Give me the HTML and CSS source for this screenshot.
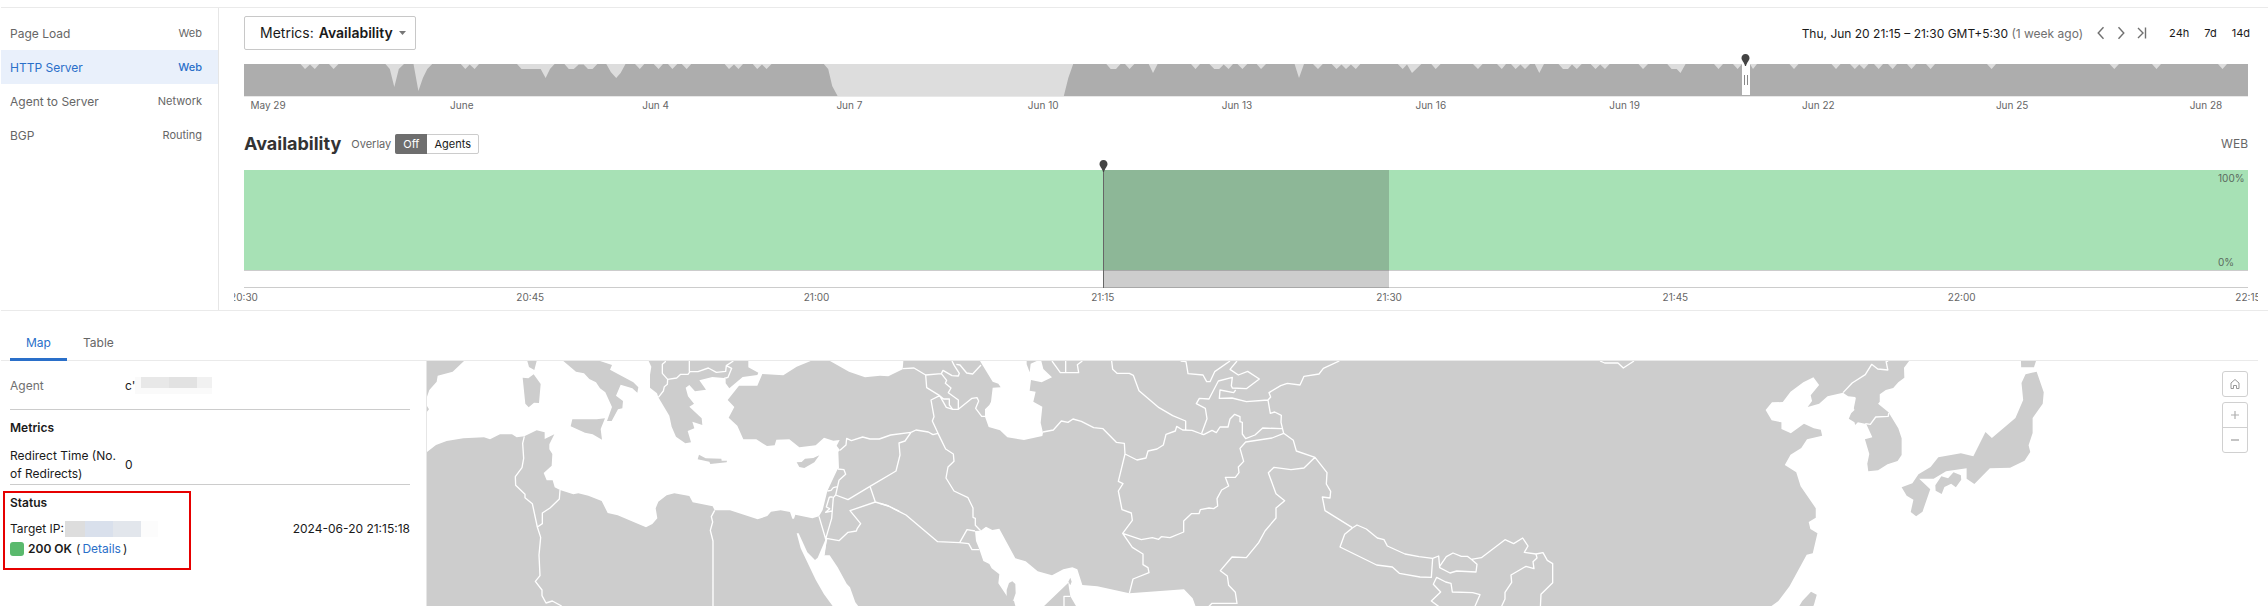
FILE: index.html
```
<!DOCTYPE html>
<html lang="en">
<head>
<meta charset="utf-8">
<title>Test view</title>
<link rel="stylesheet" href="styles.css">
</head>
<body>
<section class="top">
  <nav class="layers">
    <a class="layer" href="#page"><span>Page Load</span><span class="layer-type">Web</span></a>
    <a class="layer active" href="#http"><span>HTTP Server</span><span class="layer-type">Web</span></a>
    <a class="layer" href="#agent"><span>Agent to Server</span><span class="layer-type">Network</span></a>
    <a class="layer" href="#bgp"><span>BGP</span><span class="layer-type">Routing</span></a>
  </nav>
  <main class="timeline">
    <div class="toolbar">
      <button class="metric-button" type="button">Metrics: <b>Availability</b><svg width="7" height="4" viewBox="0 0 7 4"><path d="M0 0H7L3.500 4Z" fill="#777"/></svg></button>
      <div class="range">
        <span class="date">Thu, Jun 20 21:15 – 21:30 GMT+5:30 <span class="muted">(1 week ago)</span></span>
        <span class="steps">
          <button type="button" aria-label="Previous"><svg width="8" height="14" viewBox="0 0 8 14"><path d="M6.500 1.200L1.200 7L6.500 12.800"/></svg></button>
          <button type="button" aria-label="Next"><svg width="8" height="14" viewBox="0 0 8 14"><path d="M1.500 1.200L6.800 7L1.500 12.800"/></svg></button>
          <button type="button" aria-label="Latest"><svg width="10" height="14" viewBox="0 0 10 14"><path d="M1 2L6 7L1 12M8.500 1.500V12.500"/></svg></button>
        </span>
        <span class="spans">
          <button type="button">24h</button><button type="button">7d</button><button type="button">14d</button>
        </span>
      </div>
    </div>
    <div class="overview">
      <svg class="overview-plot" viewBox="0 0 2004 32" preserveAspectRatio="none">
        <rect width="2004" height="32" fill="#adadad"/>
        <path fill="#ddd" d="M56.500 0L61 5L66 .5L70.800 5L75.300 0ZM85 0L89.600 5L94.500 0ZM141.400 0L145.800 5L150.300 23L154.800 5L160 0ZM169.500 0L174.400 27L178.900 14L183.300 5L188.200 0ZM216.800 0L221.300 5L225.700 .5L230.600 5L235 0ZM273 0L277.500 5H296.700L301.600 14L306 5L310.600 0ZM320.400 0L324.800 5H329.800L334.700 .5H339.600L344 5H348.500L353.400 0ZM362.300 0L366.800 8L372.200 14L376.600 9L381.500 0ZM391 0L395.800 5L400.300 0ZM409.700 0L414.600 5L419 0ZM424 0L428.400 5L433.300 0ZM437.800 0L442.700 5L447.200 0ZM480.600 0L485 5L490 .5L494.500 5L499 0ZM508.800 0L513.200 5L518 .5L522.600 5L527.500 0ZM579.800 0L584.200 5L588.200 22L593.600 32H819.800L824.300 14L829.200 0ZM862.300 0L866.700 5H872L876.500 0ZM881 0L885.500 5L890.400 0ZM904.700 0L909 9L913.600 0ZM947 0L951.500 5L956 0ZM965.400 0L970.300 5H975.200L979.700 .5L984.600 5L989 0ZM993.500 0L998.400 5L1003.300 0ZM1012.700 0L1017 5L1022 0ZM1050.600 0L1055 14L1060 0ZM1069 0L1074 5L1078.800 0ZM1087.700 0L1092.600 5L1097.500 .5L1102 5L1106.900 .5L1111.800 5L1116.300 0ZM1153.800 0L1158.700 5L1163 .5L1168 9L1177.400 0ZM1187.300 0L1191.700 5L1196.600 0ZM1229 0L1234 5L1238.600 0ZM1253 0L1257.800 5L1262 0ZM1267 0L1271.600 5L1276.500 .5L1281 5L1286 0ZM1290.800 0L1295.300 9L1300 0ZM1314.500 0L1319 5H1324L1328 .5L1332.800 5L1337.700 0ZM1346.600 0L1351.500 5L1356.200 .5L1361 5L1365.600 0ZM1394.500 0L1399 5L1404 0ZM1423.300 0L1427.600 5H1432.700L1436.500 9L1441.600 0ZM1470 0L1474.500 5L1479 0ZM1489 0L1493.600 5L1498 0ZM1506 0L1509 5L1513 0ZM1545.500 0L1550 5L1554.500 0ZM1587.500 0L1592 5L1596.500 0ZM1606 0L1610.800 5L1615.300 .5L1620 5L1624.500 0ZM1630 0L1634.700 5L1639 0ZM1644 0L1648.700 5L1653 0ZM1663 0L1667.500 5L1672 0ZM1682 0L1686.600 5L1691 0ZM1743 0L1747.600 5L1752 0ZM1865.600 0L1870.300 5L1875 0ZM1908 0L1912.500 5L1917 0ZM1974 0L1978.500 5L1983 0Z"/>
      </svg>
      <div class="handle"><svg class="pin" width="9" height="12" viewBox="0 0 9 12"><path d="M4.500 0C2 0 .5 1.800 .5 4C.5 6.500 3 8 4 12H5C6 8 8.500 6.500 8.500 4C8.500 1.800 7 0 4.500 0Z"/></svg></div>
    </div>
    <div class="day-axis">
      <span>May 29</span><span>June</span><span>Jun 4</span><span>Jun 7</span><span>Jun 10</span><span>Jun 13</span><span>Jun 16</span><span>Jun 19</span><span>Jun 22</span><span>Jun 25</span><span>Jun 28</span>
    </div>
    <div class="chart-head">
      <h2>Availability</h2>
      <span class="overlay-label">Overlay</span>
      <div class="toggle"><button class="on" type="button">Off</button><button type="button">Agents</button></div>
      <span class="web">WEB</span>
    </div>
    <div class="chart">
      <div class="area"><span>100%</span><span>0%</span></div>
      <div class="selection"><svg class="pin" width="9" height="12" viewBox="0 0 9 12"><path d="M4.500 0C2 0 .5 1.800 .5 4C.5 6.500 3 8 4 12H5C6 8 8.500 6.500 8.500 4C8.500 1.800 7 0 4.500 0Z"/></svg></div>
    </div>
    <div class="time-clip"><div class="time-axis">
      <span>20:30</span><span>20:45</span><span>21:00</span><span>21:15</span><span>21:30</span><span>21:45</span><span>22:00</span><span>22:15</span>
    </div></div>
  </main>
</section>
<section class="bottom">
  <nav class="tabs"><a class="tab current" href="#map">Map</a><a class="tab" href="#table">Table</a></nav>
  <div class="views">
    <aside class="details">
      <div class="row agent"><span class="key muted">Agent</span><span>c'</span><span class="mask"><i class="m1"></i><i class="m2"></i><i class="m3"></i></span></div>
      <div class="group">
        <h3>Metrics</h3>
        <div class="row"><span class="key">Redirect Time (No. of Redirects)</span><span>0</span></div>
      </div>
      <div class="group status">
        <h3>Status</h3>
        <div class="row target"><span>Target IP:</span><span class="mask ip"><i class="p1"></i><i class="p2"></i><i class="p3"></i><i class="p4"></i></span><time>2024-06-20 21:15:18</time></div>
        <div class="row code"><i class="square"></i><b>200 OK</b><span class="more">(<a href="#details">Details</a>)</span></div>
      </div>
      <div class="highlight"></div>
    </aside>
    <div class="map">
      <svg class="world" viewBox="1281 18 5493 735" preserveAspectRatio="xMinYMin slice">
        <rect x="1260" y="0" width="4600" height="760" fill="#cdcdcd"/>
        <g transform="translate(1260 0)">
          <path class="sea" d="M132 10V18L98 50L53 62L50 80L28 105L20 128V292L48 270L80 258L130 250L192 247L210 253L240 238H276L290 247L313 244L350 226L374 232V252L403 238L388 268V283L397 297L395 332L371 354L380 376H398L404 397L420 405L460 418L475 415L505 422L545 438L563 474L593 481L678 517L697 507L712 490L707 460L715 440L740 421L763 415L808 423L818 442L878 454L884 466H930L1013 493L1042 483L1053 470L1082 466L1110 471L1117 491H1122L1126 479L1177 490L1197 484L1208 465L1222 408L1253 342L1257 340L1255 290L1260 286L1250 272L1259 255L1240 257L1212 248L1187 271L1138 277L1108 253L1069 254L1064 271L1041 273L1009 253H970L952 212L926 188L943 156L923 135L957 92H1012L1027 57L1090 61L1130 35L1172 18V10H985V37L1015 53L1012 60L968 66L928 100L917 85V66L911 69L877 66L838 76L858 104L825 109L808 90L797 98L804 124L822 146L808 155L845 190L847 210L817 200L823 220L803 228L813 262L796 265L768 245L755 215L748 182L715 127L711 115L690 98V60L694 35L686 18V10H540V18L576 30L570 44L640 82L655 97L652 113L637 100L602 89L588 122L609 138L607 160L594 163L575 198H561L576 156L556 112L540 100L528 82L508 72L492 55L468 50L430 18V10Z"/>
          <path class="sea" d="M1230 10V18L1287 50L1335 67L1380 62L1405 64L1448 43L1450 18V10Z"/>
          <path class="sea" d="M1130 535H1136L1162 592L1185 615L1193 608L1217 552H1222L1212 601H1229L1253 637L1280 686L1290 697L1306 742L1320 760H1243L1212 718L1187 674L1142 580Z"/>
          <path class="land" d="M308 68L325 70L341 58L362 87L357 144L342 143L326 157L316 146ZM322 10H350V18L343 45L327 36L322 18ZM457 193H530L555 190L542 222L546 254L518 238L495 233L452 214ZM837 299L857 310L904 311L905 317H921L920 322L871 327L868 320L833 313ZM1130 322L1145 321L1155 311L1180 309L1198 301L1183 322L1153 339L1138 336ZM18 148L27 163L18 174Z"/>
          <path class="line" d="M313 244L308 265L311 310L306 338L286 365L287 391L315 418V428L337 446L352 516L362 547L357 600L360 662L346 679L366 705V722L378 744L397 738L425 753M420 405L418 432L390 459L367 474V506L352 516M884 466L874 485L878 501L871 526L879 558V760M1197 484L1217 552M736 10V20L727 28V55L743 73L770 69L782 58H804L810 50H834L865 39L889 52L917 49L919 32L940 18M808 10V50M743 73L742 88L733 95L730 108L715 127M919 32L935 40L924 67L917 69M1260 286L1278 270L1280 250L1294 257L1328 246L1350 252H1378L1412 240L1473 232M1253 342L1272 344L1277 358L1257 376L1252 398L1247 420L1240 428L1235 490L1219 545L1212 601M1247 420L1284 434L1350 394L1428 348L1440 300L1437 264L1455 258L1473 232M1350 394L1366 441L1290 467L1322 506L1312 520L1309 528L1284 532L1257 557L1219 550M1366 441L1405 453L1438 469M1252 395L1240 398L1233 406L1222 408M1228 426H1238M1228 426L1219 456L1229 461L1217 472L1236 468"/>
        </g>
        <g transform="translate(2640 0)">
          <path class="sea" d="M296 10L300 18L338 80L355 86L362 97L338 98L333 140L328 150L315 163V185L326 216L360 226L382 247L432 255L487 243L489 233L482 203L487 155L460 140L467 110L449 107L453 75L485 82L516 67L490 42L484 18V10H470V18L452 26L449 52L440 28V10Z"/>
          <path class="sea" d="M285 528L302 527L318 515L337 525L358 521L406 610L437 619L473 649L516 661L550 643L577 637L592 643L607 690L652 694L748 715L912 703L938 730L949 760H592L571 724L567 700L565 683L485 760H408L402 738L382 725L355 685L358 658L335 640L328 627L310 618L298 583L288 558Z"/>
          <path class="land" d="M380 705L387 684L397 679L406 687L407 715L400 735L390 738L380 728ZM565 680L571 668L575 680L571 691Z"/>
          <path class="line" d="M68 41L102 39L137 60L184 56L189 46L216 62L235 63L238 55L223 32L216 18M229 28L240 30L260 54L278 57L303 30M137 60L140 98L179 122L199 157L218 163L208 150V132H191L179 122M184 56L200 76L196 85L213 99L205 113L235 135V163L218 163M235 163L276 130L291 128L296 138L287 160L305 184H315M179 122L153 135L162 185L157 198L174 235L159 239L145 231L108 225L93 232M174 235L197 282L220 297L222 319L204 336L198 369L222 408L264 428L279 459V487L286 490V511L302 527M58 470L78 480L173 560L239 563L266 566L276 584H298M58 470L26 453L0 445M239 563L261 524L285 528M489 231L520 225L544 198L564 202L579 192L604 199L641 218L669 221L709 262L733 265L735 297L715 379L729 386L715 408L726 464L754 474L757 496L728 535L757 577L789 597V629L804 638L807 653L759 672L748 715M735 297L771 315L798 309L804 288L831 282L850 270L858 238L886 228L890 214L908 225L936 226L965 237L971 239L996 226L1009 233L1020 216H1044L1050 192L1064 178L1080 185V200L1087 202V237L1097 251L1125 240L1148 219L1206 221M728 535L784 554L817 548L836 553L844 545L870 548L911 531V498L934 476H957L961 464L987 459L1001 461L1013 453L1011 431L1025 405L1046 393L1036 367H1066L1077 353L1075 336L1091 319L1080 280L1097 261L1176 249L1211 235M516 18L541 53H596L592 29L607 18M557 10V53M694 10L698 43L711 55H748L760 61L777 107L837 158L878 182L917 198V226M902 18L918 20L924 56L969 60L980 80H990L1004 50L1050 18M1071 18L1050 43L1075 60L1103 49L1138 72L1099 101L1057 99L1054 92L1057 67L1015 78L987 132L958 130L949 146L976 160L981 191L965 235M1067 105L1061 113L1020 105L1018 130L1056 129L1099 140L1164 135L1171 175L1184 171L1204 181L1203 202L1211 235L1240 256L1249 288L1305 307L1341 353L1339 387L1352 409L1350 429L1327 426L1335 467L1417 518M1164 135L1172 126L1167 113L1202 92L1222 85L1260 90L1272 64L1317 57L1330 40L1378 18M1305 307L1272 339L1233 344L1182 337L1165 353L1188 416L1214 437L1188 459V489L1155 528L1136 563L1099 608L1056 606L1021 647L1042 663L1046 691L1066 712L1071 745H996L985 756"/>
          <path class="line" d="M552 760V724H571"/>
        </g>
        <g transform="translate(3900 0)">
          <path class="line" d="M157 519L171 510L199 522L232 549L252 554L262 573L315 597L357 605L398 610L394 667L360 666L298 655L277 636L230 630L120 576L134 538L157 519M398 610L416 603L419 638L450 654L470 648L528 651L531 628L514 613L502 604H484L459 594L439 605L419 634M514 613L544 608L615 554L641 566L668 549L684 573L673 592L708 597L729 593L742 616L758 626V683L723 718L721 760M708 597L711 609L699 620L702 641L678 634L633 660L635 682L615 712V732L603 758M417 755L394 738L422 711L400 688L410 667L437 681L453 685L457 711L518 713L540 719L524 756M900 18L914 24H954L970 39L1002 18"/>
        </g>
        <g transform="translate(5220 0) scale(1.0102 1)">
          <path class="sea" d="M1600 10H502V18L487 38L488 68L470 82L455 99L433 105L415 118V140L410 146L441 172L470 220L480 250V300L468 318L438 328L410 346L381 349L378 326L384 297L371 253L393 247L375 207L350 202L342 210L340 202L323 191L330 175L340 165L338 160L344 130L342 126L321 124L306 113L260 124L235 146L201 156L214 138L210 121L235 90L218 67L188 82L150 110L127 141L95 142L76 165L94 196L123 202V222L151 235L190 206L219 220L240 224L244 242L199 253L182 279L150 299L133 330L167 352L180 394L225 460V488L204 501L209 522L230 535L216 595L198 599L147 694L114 738L84 760H1600Z"/>
          <path class="line" d="M306 113L333 84L372 59L391 28L409 42L439 45L434 20L440 18M372 206L387 208L403 186L440 184L442 174"/>
          <path class="land" d="M834 10H879V18L873 37H835ZM848 58L881 50L902 112L899 146L869 189V234L857 271L862 291L845 317L802 338L742 340L696 387L673 371V340L612 349L575 371H532L565 403L542 470L523 484L507 471L515 434L495 422L480 397L512 385L530 358L566 336L589 307L656 295L693 304L729 231L748 249L818 189L841 135L836 84ZM598 364L618 370L634 352L656 361L657 374L641 397L627 386L607 396L599 417L581 407L580 391ZM185 738L211 710L228 719L220 748L215 760H172Z"/>
        </g>
      </svg>
      <div class="map-controls">
        <button class="home" type="button" aria-label="Home"><svg width="10" height="12" viewBox="0 0 10 12"><path d="M1 5L5 1.500L9 5V10.500H6.500V7.500H3.500V10.500H1Z" fill="none" stroke="#999"/></svg></button>
        <div class="zoom">
          <button type="button" aria-label="Zoom in"><svg width="10" height="10" viewBox="0 0 10 10"><path d="M1 5H9M5 1V9" stroke="#b0b0b0" stroke-width="1.200"/></svg></button>
          <button type="button" aria-label="Zoom out"><svg width="10" height="10" viewBox="0 0 10 10"><path d="M1 5H9" stroke="#b0b0b0" stroke-width="1.500"/></svg></button>
        </div>
      </div>
    </div>
  </div>
</section>
</body>
</html>
```
FILE: styles.css
```
* { box-sizing: border-box; }
body {
  margin: 0;
  padding: 7px 0 0 1px;
  min-height: 100vh;
  display: flex;
  flex-direction: column;
  background: #fff;
  color: #1a1a1a;
  font: 12px/18px Inter, "Liberation Sans", sans-serif;
}
a { color: #2a6fc9; text-decoration: none; }
button {
  font: inherit;
  color: inherit;
  background: none;
  border: 0;
  padding: 0;
}
svg { display: block; }
h2, h3 { margin: 0; }
.muted { color: #707070; }

.top { display: flex; border-top: 1px solid #eaeaea; border-bottom: 1px solid #eaeaea; }
.layers { width: 218px; padding-top: 8px; border-right: 1px solid #e6e6e6; }
.layer {
  display: flex;
  align-items: center;
  justify-content: space-between;
  height: 34px;
  padding: 2px 16px 0 9px;
  color: #666;
}
.layer-type { font-size: 11px; line-height: 20px; margin-bottom: 2px; }
.layer.active { background: #e9f0fb; color: #2a6fc9; }
.layer.active .layer-type { font-weight: 500; }

.timeline { flex: 1; min-width: 0; padding: 8px 20px 0 25px; }
.toolbar { display: flex; align-items: center; justify-content: space-between; height: 34px; }
.metric-button {
  display: flex;
  align-items: center;
  gap: 5px;
  height: 34px;
  padding: 0 9px 0 15px;
  border: 1px solid #c8c8c8;
  border-radius: 2px;
  font-size: 14px;
}
.metric-button b { font-weight: 600; }
.metric-button svg { margin-left: 1px; }
.range { display: flex; align-items: center; margin-right: -2px; }
.date { padding-top: 1px; }
.steps { display: flex; gap: 12px; margin: 0 22px 0 14px; }
.steps path { fill: none; stroke: #707070; stroke-width: 1.4; }
.spans { display: flex; gap: 15px; font-size: 11px; }

.overview { position: relative; margin-top: 14px; border-bottom: 1px solid #e8e8e8; }
.overview-plot { width: 100%; height: 32px; }
.handle {
  position: absolute;
  left: 74.75%;
  top: 0;
  width: 8px;
  height: 31px;
  background: linear-gradient(#888, #888) 2px 11px / 1px 10px no-repeat, linear-gradient(#888, #888) 5px 11px / 1px 10px no-repeat, #fff;
}
.pin { position: absolute; left: -5px; top: -10px; fill: #444; }
.handle .pin { left: -1px; }
.day-axis { display: flex; justify-content: space-between; margin-right: 18px; color: #666; font-size: 10px; line-height: 16px; }
.day-axis span { width: 48px; text-align: center; }

.chart-head { display: flex; align-items: center; height: 20px; margin-top: 21px; }
.chart-head h2 { font-size: 18px; font-weight: 700; color: #333; }
.overlay-label { margin: 0 4px 0 10px; color: #666; font-size: 11px; }
.toggle { display: flex; height: 20px; border: 1px solid #ccc; border-radius: 2px; font-size: 11px; }
.toggle button { padding: 0 7px; }
.toggle .on { margin: -1px 0 -1px -1px; padding: 0 8px; background: #6e6e6e; color: #fff; border-radius: 2px 0 0 2px; }
.web { margin-left: auto; color: #666; }

.chart { position: relative; margin-top: 16px; padding-bottom: 16px; border-bottom: 1px solid #ccc; }
.area {
  display: flex;
  flex-direction: column;
  align-items: flex-end;
  justify-content: space-between;
  height: 101px;
  background: #a7e1b5;
  border-bottom: 1px solid #ccc;
  color: #5a6a5e;
  font-size: 10px;
  line-height: 16px;
}
.area span { width: 30px; }
.selection {
  position: absolute;
  left: 42.85%;
  top: 0;
  bottom: -1px;
  width: 14.3%;
  background: rgba(75, 75, 75, .28);
  border-left: 1px solid #666;
}
.time-clip { overflow: hidden; margin: 0 -10px; height: 22px; }
.time-axis { display: flex; justify-content: space-between; margin: 0 -10px; color: #666; font-size: 10px; line-height: 18px; }
.time-axis span { width: 40px; text-align: center; }

.bottom { flex: 1; display: flex; flex-direction: column; }
.tabs { display: flex; height: 50px; margin-right: 10px; padding: 14px 0 0 9px; border-bottom: 1px solid #eaeaea; }
.tab { padding: 9px 16px 0; height: 36px; color: #666; }
.tab.current { color: #2a6fc9; border-bottom: 3px solid #2a6fc9; }
.views { flex: 1; display: flex; margin-right: 10px; }
.details { position: relative; width: 426px; padding: 0 16px 0 9px; border-right: 1px solid #e6e6e6; }
.row { display: flex; align-items: center; }
.key { width: 115px; }
.agent { height: 48px; padding-top: 2px; }
.mask { display: flex; background: #fafafa; height: 17px; padding-left: 6px; }
.agent .mask { margin-bottom: 2px; }
.mask i { height: 11px; width: 28px; }
.m1 { background: #e8e8e8; }
.m2 { background: #e2e2e2; }
.mask .m3 { width: 15px; background: #f1f1f1; }
.group { border-top: 1px solid #ccc; padding-top: 9px; height: 75px; }
h3 { font-size: 12px; line-height: 18px; font-weight: 600; }
.group .row { margin-top: 10px; }
.group .target { margin-top: 8px; }
.mask.ip { height: 16px; padding: 0; margin-left: 1px; }
.ip i { height: 16px; }
.mask .p1 { width: 20px; background: #ddd; }
.p2 { background: #d9e0ec; }
.p3 { background: #e2e6ec; }
.mask .p4 { width: 17px; background: #fcfcfc; }
time { margin-left: auto; }
.group .code { margin-top: 2px; gap: 4px; }
.code b { font-weight: 600; }
.more a { margin: 0 2px; }
.square { width: 14px; height: 14px; border-radius: 3px; background: #5ab96d; }
.highlight { position: absolute; left: 2px; top: 130px; width: 188px; height: 79px; border: 2px solid #e60000; }
.map { position: relative; flex: 1; overflow: hidden; }
.world { position: absolute; inset: 0; width: 100%; height: 100%; }
.sea { fill: #fff; }
.land { fill: #cdcdcd; }
.line { fill: none; stroke: #fff; stroke-width: 4; stroke-linejoin: round; }
.map-controls { position: absolute; right: 10px; top: 10px; display: grid; gap: 5px; }
.home, .zoom { width: 26px; border: 1px solid #d0d0d0; border-radius: 3px; background: #fff; }
.home { display: grid; place-items: center; height: 26px; }
.zoom button { display: grid; place-items: center; width: 24px; height: 24px; }
.zoom button + button { height: 25px; border-top: 1px solid #d0d0d0; }
```
